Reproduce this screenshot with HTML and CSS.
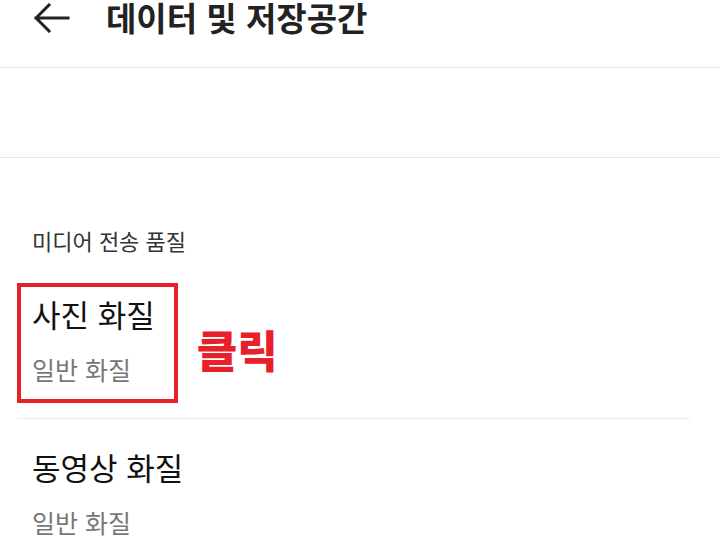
FILE: index.html
```html
<!DOCTYPE html>
<html lang="ko">

<head>
    <meta charset="UTF-8">
    <meta name="viewport" content="width=device-width, initial-scale=1.0">
    <title>데이터 및 저장공간</title>
    <link rel="stylesheet" href="styles.css">
</head>

<body>
    <header class="top-bar">
        <svg class="back-icon" width="36" height="30" viewBox="0 0 36 30">
            <path d="M2 15 H34 M15 2 L2 15 L15 28" fill="none" stroke="#222" stroke-width="3" stroke-linecap="square" />
        </svg>
        <h1>데이터 및 저장공간</h1>
    </header>

    <div class="spacer"></div>

    <section class="settings">
        <h2 class="section-title">미디어 전송 품질</h2>

        <div class="setting-row first">
            <div class="setting highlight">
                <div class="setting-name">사진 화질</div>
                <div class="setting-value">일반 화질</div>
            </div>
            <span class="click-label">클릭</span>
        </div>

        <div class="setting-row last">
            <div class="setting">
                <div class="setting-name">동영상 화질</div>
                <div class="setting-value">일반 화질</div>
            </div>
        </div>
    </section>
</body>

</html>
```

FILE: styles.css
```css
body {
    font-family: "Noto Sans CJK KR", "Noto Sans", sans-serif;
    background-color: #fff;
    color: #111;
    margin: 0;
    padding: 0;
    overflow: hidden;
}

.top-bar {
    display: flex;
    align-items: flex-start;
    height: 68px;
    padding-left: 34px;
    border-bottom: 1px solid #e4e4e4;
    box-sizing: border-box;
}

.top-bar h1 {
    margin: 1px 0 0 36px;
    font-size: 33px;
    font-weight: bold;
    color: #222;
    line-height: 33px;
}

.back-icon {
    display: block;
    margin-top: 3px;
}

.spacer {
    height: 89px;
    border-bottom: 1px solid #e8e8e8;
}

.section-title {
    margin: 0;
    padding: 67px 0 0 32px;
    font-size: 22px;
    font-weight: normal;
    color: #333;
    line-height: 30px;
}

.setting-row {
    display: flex;
    align-items: center;
    margin: 0 30px;
    border-bottom: 1px solid #ececec;
}

.setting-row.first {
    margin-top: 28px;
    margin-left: 17px;
    padding-bottom: 15px;
}

.setting-row.last {
    border-bottom: none;
    padding-top: 28px;
    margin-left: 32px;
}

.setting.highlight {
    border: 4px solid #e8202a;
    padding: 7px 19px 14px 11px;
}

.setting-name {
    font-size: 31px;
    line-height: 40px;
    color: #111;
}

.setting-value {
    margin-top: 19px;
    font-size: 25px;
    line-height: 32px;
    color: #777;
}

.click-label {
    margin-left: 19px;
    margin-top: 11px;
    font-size: 44px;
    font-weight: 900;
    color: #e8202a;
}
```
